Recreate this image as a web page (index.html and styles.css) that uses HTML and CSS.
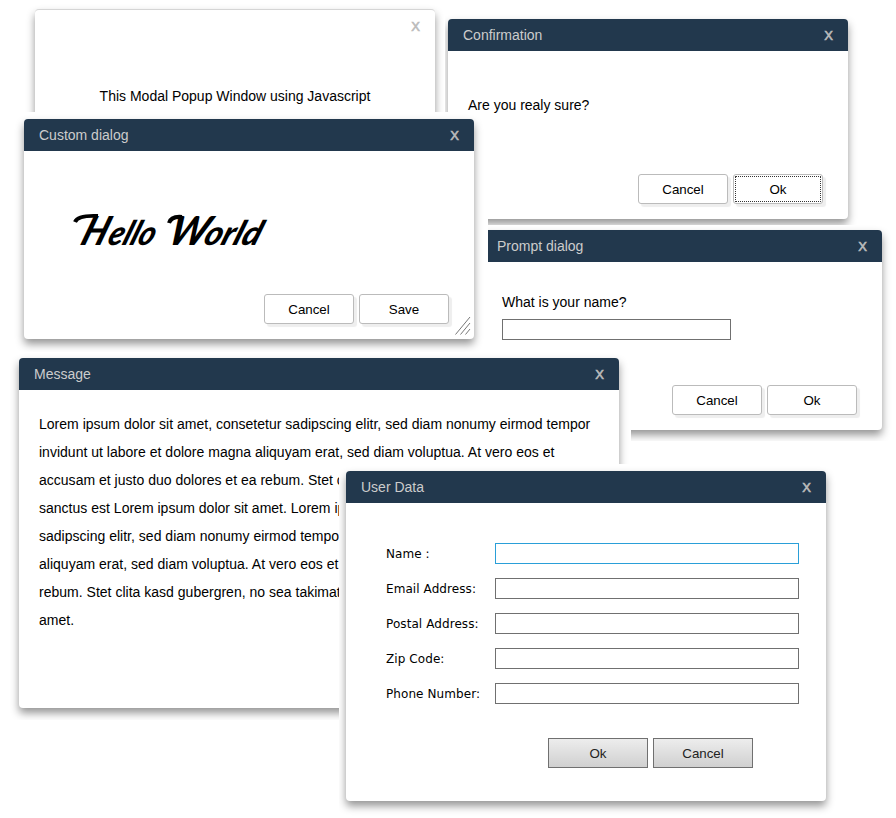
FILE: index.html
```html
<!DOCTYPE html>
<html lang="en">
<head>
<meta charset="utf-8">
<title>Dialogs</title>
<link rel="stylesheet" href="styles.css">
</head>
<body>
<main class="desktop">
  <div class="pane pane-confirm">
    <section class="dialog">
      <header class="bar"><span>Confirmation</span><span class="close">X</span></header>
      <div class="body"><p>Are you realy sure?</p></div>
      <footer class="actions"><button class="btn">Cancel</button><button class="btn focused">Ok</button></footer>
    </section>
  </div>

  <div class="pane pane-modal">
    <section class="dialog plain">
      <header class="bar"><span></span><span class="close">X</span></header>
      <p class="modal-text">This Modal Popup Window using Javascript</p>
    </section>
  </div>

  <div class="pane pane-custom">
    <section class="dialog">
      <header class="bar"><span>Custom dialog</span><span class="close">X</span></header>
      <div class="body">
        <svg class="script-text" width="206" height="60" viewBox="0 0 206 60">
          <g transform="translate(0 45) skewX(-20)">
            <text x="0" y="0"><tspan class="cap" x="5" textLength="25" lengthAdjust="spacingAndGlyphs">H</tspan><tspan x="32" textLength="46" lengthAdjust="spacingAndGlyphs">ello</tspan> <tspan class="cap" x="92" textLength="38" lengthAdjust="spacingAndGlyphs">W</tspan><tspan x="128" textLength="56" lengthAdjust="spacingAndGlyphs">orld</tspan></text>
          </g>
          <path class="swash" d="M1 22Q4 15 24 16M95 23Q97 16 108 17"/>
        </svg>
      </div>
      <footer class="actions"><button class="btn">Cancel</button><button class="btn">Save</button></footer>
      <svg class="grip" width="16" height="19" viewBox="0 0 16 19"><path d="M.5 18.5L15 1M5.500 18.500L15 7M10.500 18.500L15 13"/></svg>
    </section>
  </div>

  <div class="pane pane-prompt">
    <section class="dialog">
      <header class="bar"><span>Prompt dialog</span><span class="close">X</span></header>
      <div class="body">
        <label for="answer">What is your name?</label>
        <input id="answer" class="field" type="text">
      </div>
      <footer class="actions"><button class="btn">Cancel</button><button class="btn">Ok</button></footer>
    </section>
  </div>

  <div class="pane pane-message">
    <section class="dialog">
      <header class="bar"><span>Message</span><span class="close">X</span></header>
      <div class="body">
        <p>Lorem ipsum dolor sit amet, consetetur sadipscing elitr, sed diam nonumy eirmod tempor<br>
        invidunt ut labore et dolore magna aliquyam erat, sed diam voluptua. At vero eos et<br>
        accusam et justo duo dolores et ea rebum. Stet c<br>
        sanctus est Lorem ipsum dolor sit amet. Lorem ip<br>
        sadipscing elitr, sed diam nonumy eirmod tempo<br>
        aliquyam erat, sed diam voluptua. At vero eos et<br>
        rebum. Stet clita kasd gubergren, no sea takimat<br>
        amet.</p>
      </div>
    </section>
  </div>

  <div class="pane pane-user">
    <section class="dialog">
      <header class="bar"><span>User Data</span><span class="close">X</span></header>
      <form class="form">
        <label for="name">Name :</label><input id="name" class="field active" type="text">
        <label for="email">Email Address:</label><input id="email" class="field" type="text">
        <label for="postal">Postal Address:</label><input id="postal" class="field" type="text">
        <label for="zip">Zip Code:</label><input id="zip" class="field" type="text">
        <label for="phone">Phone Number:</label><input id="phone" class="field" type="text">
      </form>
      <footer class="form-actions"><button class="native">Ok</button><button class="native">Cancel</button></footer>
    </section>
  </div>
</main>
</body>
</html>
```
FILE: styles.css
```css
* { box-sizing: border-box; }

body {
  margin: 0;
  background: #fff;
  font: 14px "Liberation Sans", Arial, sans-serif;
  color: #000;
}

p { margin: 0; }

.desktop {
  position: relative;
  width: 896px;
  height: 818px;
  overflow: hidden;
}

/* Each pane is an opaque tile that clips the dialog and its shadow. */
.pane {
  position: absolute;
  overflow: hidden;
  background: #fff;
}

.pane-confirm { left: 445px; top: 8px; width: 451px; height: 217px; padding: 11px 3px; }
.pane-modal { left: 20px; top: 0; width: 424px; height: 112px; padding: 9px 15px; }
.pane-custom { left: 10px; top: 112px; width: 478px; height: 240px; padding: 7px 14px; }
.pane-prompt { left: 488px; top: 225px; width: 408px; height: 216px; padding-top: 5px; }
.pane-message { left: 10px; top: 352px; width: 621px; height: 368px; padding: 6px 9px; }
.pane-user { left: 339px; top: 464px; width: 500px; height: 354px; padding: 7px; }

.dialog {
  position: relative;
  display: flex;
  flex-direction: column;
  width: 400px;
  height: 200px;
  background: #fff;
  border-radius: 4px;
  box-shadow: 0 5px 8px rgba(0, 0, 0, .42);
}

.pane-custom .dialog { width: 450px; height: 220px; }
.pane-prompt .dialog { margin-left: -6px; }
.pane-message .dialog { width: 600px; height: 350px; }
.pane-user .dialog { width: 480px; height: 330px; }

.bar {
  flex: none;
  display: flex;
  justify-content: space-between;
  align-items: center;
  height: 32px;
  padding: 0 15px;
  border-radius: 4px 4px 0 0;
  background: #22384d;
  color: #ccc;
}

.close {
  font-size: 13px;
  color: #bbb;
  -webkit-text-stroke: .6px #bbb;
}

.plain { border-top: 1px solid #d5d5d5; }
.plain .bar { background: transparent; }
.modal-text { margin-top: 46px; text-align: center; }

.body { flex: 1; padding: 46px 20px 0; }

.actions {
  display: flex;
  justify-content: flex-end;
  gap: 5px;
  padding: 0 25px 15px 0;
}

.btn {
  width: 90px;
  height: 30px;
  padding: 0;
  border: 1px solid #bbb;
  border-radius: 3px;
  background: #fff;
  box-shadow: 3px 3px 1px #eee;
  font: 13.33px "Liberation Sans", Arial, sans-serif;
  color: #000;
}

.focused { outline: 1px dotted #333; outline-offset: -3px; }

.pane-custom .body { padding: 49px 50px 0; }
.script-text { display: block; overflow: visible; }
.script-text text {
  font: italic 900 34px Lato, sans-serif;
}
.script-text .cap { font-size: 40px; }
.swash { fill: none; stroke: #000; stroke-width: 4; }

.grip {
  position: absolute;
  right: 3px;
  bottom: 4px;
  fill: none;
  stroke: #777;
}

.field {
  display: block;
  width: 100%;
  height: 21px;
  padding: 0 3px;
  border: 1px solid #707070;
  background: #fff;
  outline: none;
}

.active { border-color: #2a9fd8; }

.pane-prompt .body { padding: 32px 20px 0; }
.pane-prompt label { display: block; line-height: 16px; margin-bottom: 9px; }
.pane-prompt .field { width: 229px; }

.pane-message .body {
  padding: 20px;
  line-height: 28px;
  letter-spacing: .012px;
  white-space: nowrap;
}

.form {
  display: grid;
  grid-template-columns: 109px 304px;
  grid-auto-rows: 21px;
  row-gap: 14px;
  align-items: center;
  padding: 40px 0 0 40px;
}

.form label {
  font: 12px "DejaVu Sans", Verdana, sans-serif;
  letter-spacing: .08px;
}

.form-actions {
  display: flex;
  gap: 5px;
  margin: 34px 0 0 202px;
}

.native {
  width: 100px;
  height: 30px;
  padding: 0;
  border: 1px solid #707070;
  border-radius: 0;
  background: linear-gradient(#ededed, #d0d0d0);
  font: 13.33px "Liberation Sans", Arial, sans-serif;
  color: #222;
}
```
